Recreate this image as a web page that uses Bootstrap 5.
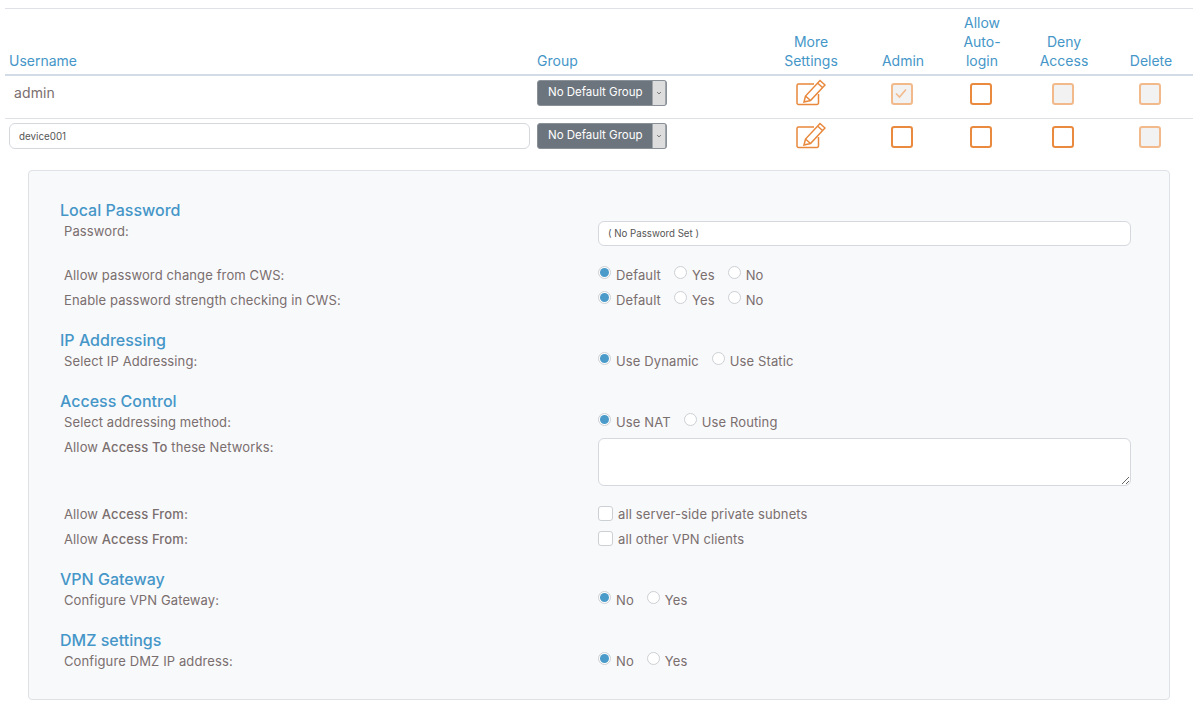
<!DOCTYPE html>
<html lang="en">
<head>
  <meta charset="UTF-8">
  <meta name="viewport" content="width=device-width, initial-scale=1.0">
  <title>User Permissions</title>
  <link href="https://cdn.jsdelivr.net/npm/bootstrap@5.3.0/dist/css/bootstrap.min.css" rel="stylesheet">
  <style>
    body { font-family: Inter, "Open Sans", sans-serif; font-size: 13px; letter-spacing: .12px; color: #7a6e6e; background: #fff; }
    .page-wrap { padding: 8px 7px 0 5px; }

    .user-table { table-layout: fixed; width: 1188px; margin: 0; color: #7a6e6e; }
    .user-table th, .user-table td { padding: 0 4px; background: transparent; color: inherit; }
    .user-table thead tr { height: 66px; border-top: 1px solid #dee2e6; }
    .user-table thead th { font-weight: 400; font-size: 14px; letter-spacing: 0; line-height: 19px; color: #4596c8; vertical-align: bottom; padding-bottom: 4px; border-bottom: 2px solid #d3dce6; }
    .user-table tbody tr { height: 44px; }
    .user-table tbody tr:last-child td { border-bottom: 0; }
    .user-table tbody td { vertical-align: top; padding-top: 4px; border-bottom: 1px solid #dee2e6; }
    .name-static { font-size: 14px; line-height: 26px; padding-left: 5px; display: block; }
    .name-input { width: 521px; height: 26px; font-size: 9.8px; padding: 0 9px; color: #555; border-color: #d5d9de; }

    .group-pick { width: 130px; height: 26px; padding: 0 14px 0 10px; font-size: 11.5px; letter-spacing: 0; color: #fff; border: 1px solid #8a9097; border-radius: 3px;
      background-color: #6c757d;
      background-image: url("data:image/svg+xml,%3Csvg xmlns='http://www.w3.org/2000/svg' viewBox='0 0 14 26'%3E%3Crect width='14' height='26' fill='%23dddddd'/%3E%3Cpath d='M5 12l2 2 2-2' fill='none' stroke='%23666' stroke-width='1'/%3E%3C/svg%3E");
      background-repeat: no-repeat; background-position: right center; background-size: 14px 100%; }

    .pencil-ico { display: block; margin: -2px auto 0; width: 30px; height: 28px; fill: none; stroke: #e8883c; stroke-width: 1.5; }
    .box-check { display: block; margin: 3px 0 0 calc(50% - 12px); width: 22px; height: 22px; border: 2px solid #e98a3e; border-radius: 3px; background: #fff; opacity: 1; float: none; }
    .box-check:disabled { opacity: .55; background-color: #e8e8e8; border-color: #e8812d; }
    .box-check:checked { background-color: #e8e8e8; border-color: #e8812d; background-size: 16px;
      background-image: url("data:image/svg+xml,%3Csvg xmlns='http://www.w3.org/2000/svg' viewBox='0 0 16 16'%3E%3Cpath d='M3 8.500l3.500 3.500L13 4.500' fill='none' stroke='%23e8812d' stroke-width='1.600'/%3E%3C/svg%3E"); }

    .detail-panel { margin: 7px 23px 0; padding: 29px 0 23px 31px; border: 1px solid #dee2e6; border-radius: 4px; background: #f8f9fb; }
    .sect-title { font-size: 16px; line-height: 21px; font-weight: 500; letter-spacing: 0; color: #4596c8; margin: 15px 0 0; }
    .sect-title:first-child { margin-top: 0; }
    .opt-row { display: flex; height: 25px; line-height: 20px; }
    .opt-row.row-pw { height: 44px; }
    .opt-row.row-area { height: 67px; }
    .opt-label { width: 538px; padding-left: 4px; flex: none; }
    .opt-label b { font-weight: 500; }
    .opt-value { display: flex; align-items: flex-start; width: 533px; flex: none; }
    .pw-input { height: 25px; font-size: 9.700px; padding: 0 9px; color: #555; border-color: #d5d9de; }
    .area-input { height: 48px; margin-top: 1px; border-color: #d5d9de; }

    .choice { display: inline-flex; align-items: flex-start; gap: 5px; margin-right: 13px; }
    .choice .form-check-input { width: 13px; height: 13px; margin: 1px 0 0; border-color: #ccd0d4; background-color: #fff; flex: none; }
    .choice .form-check-input[type=radio]:checked { border-color: #ccd0d4; background-color: #fff; background-size: 100% 100%;
      background-image: url("data:image/svg+xml,%3Csvg xmlns='http://www.w3.org/2000/svg' viewBox='0 0 11 11'%3E%3Ccircle cx='5.500' cy='5.500' r='4.500' fill='%234a9aca'/%3E%3C/svg%3E"); }
    .choice .form-check-input[type=checkbox] { width: 15px; height: 15px; margin-top: 2px; border-radius: 3px; }
  </style>
</head>
<body>

<div class="page-wrap">
  <table class="table user-table">
    <colgroup>
      <col style="width:528px"><col style="width:228px"><col style="width:100px"><col style="width:84px"><col style="width:74px"><col style="width:90px"><col style="width:84px">
    </colgroup>
    <thead>
      <tr>
        <th>Username</th>
        <th>Group</th>
        <th class="text-center">More<br>Settings</th>
        <th class="text-center">Admin</th>
        <th class="text-center">Allow<br>Auto-<br>login</th>
        <th class="text-center">Deny<br>Access</th>
        <th class="text-center">Delete</th>
      </tr>
    </thead>
    <tbody>
      <tr>
        <td><span class="name-static">admin</span></td>
        <td><select class="form-select group-pick"><option>No Default Group</option></select></td>
        <td><svg class="pencil-ico" viewBox="0 0 30 28"><path d="M18 6H2.500A1.500 1.500 0 0 0 1 7.500V25a1.500 1.500 0 0 0 1.500 1.500H21a1.500 1.500 0 0 0 1.500-1.500V16"/><path d="M8 24l1.500-6L24 2.500l5 4.500L14.500 22.500zM9.500 18l5 4.500M21.500 5l5 4.500"/></svg></td>
        <td><input class="form-check-input box-check" type="checkbox" checked disabled></td>
        <td><input class="form-check-input box-check" type="checkbox"></td>
        <td><input class="form-check-input box-check" type="checkbox" disabled></td>
        <td><input class="form-check-input box-check" type="checkbox" disabled></td>
      </tr>
      <tr>
        <td><input class="form-control name-input" type="text" value="device001"></td>
        <td><select class="form-select group-pick"><option>No Default Group</option></select></td>
        <td><svg class="pencil-ico" viewBox="0 0 30 28"><path d="M18 6H2.500A1.500 1.500 0 0 0 1 7.500V25a1.500 1.500 0 0 0 1.500 1.500H21a1.500 1.500 0 0 0 1.500-1.500V16"/><path d="M8 24l1.500-6L24 2.500l5 4.500L14.500 22.500zM9.500 18l5 4.500M21.500 5l5 4.500"/></svg></td>
        <td><input class="form-check-input box-check" type="checkbox"></td>
        <td><input class="form-check-input box-check" type="checkbox"></td>
        <td><input class="form-check-input box-check" type="checkbox"></td>
        <td><input class="form-check-input box-check" type="checkbox" disabled></td>
      </tr>
    </tbody>
  </table>

  <div class="detail-panel">
    <h5 class="sect-title">Local Password</h5>
    <div class="opt-row row-pw">
      <div class="opt-label">Password:</div>
      <div class="opt-value"><input class="form-control pw-input" type="text" value="( No Password Set )"></div>
    </div>
    <div class="opt-row">
      <div class="opt-label">Allow password change from CWS:</div>
      <div class="opt-value">
        <label class="choice"><input class="form-check-input" type="radio" name="pwChange" checked>Default</label>
        <label class="choice"><input class="form-check-input" type="radio" name="pwChange">Yes</label>
        <label class="choice"><input class="form-check-input" type="radio" name="pwChange">No</label>
      </div>
    </div>
    <div class="opt-row">
      <div class="opt-label">Enable password strength checking in CWS:</div>
      <div class="opt-value">
        <label class="choice"><input class="form-check-input" type="radio" name="pwStrength" checked>Default</label>
        <label class="choice"><input class="form-check-input" type="radio" name="pwStrength">Yes</label>
        <label class="choice"><input class="form-check-input" type="radio" name="pwStrength">No</label>
      </div>
    </div>

    <h5 class="sect-title">IP Addressing</h5>
    <div class="opt-row">
      <div class="opt-label">Select IP Addressing:</div>
      <div class="opt-value">
        <label class="choice"><input class="form-check-input" type="radio" name="ipMode" checked>Use Dynamic</label>
        <label class="choice"><input class="form-check-input" type="radio" name="ipMode">Use Static</label>
      </div>
    </div>

    <h5 class="sect-title">Access Control</h5>
    <div class="opt-row">
      <div class="opt-label">Select addressing method:</div>
      <div class="opt-value">
        <label class="choice"><input class="form-check-input" type="radio" name="addrMethod" checked>Use NAT</label>
        <label class="choice"><input class="form-check-input" type="radio" name="addrMethod">Use Routing</label>
      </div>
    </div>
    <div class="opt-row row-area">
      <div class="opt-label">Allow <b>Access To</b> these Networks:</div>
      <div class="opt-value"><textarea class="form-control area-input"></textarea></div>
    </div>
    <div class="opt-row">
      <div class="opt-label">Allow <b>Access From:</b></div>
      <div class="opt-value"><label class="choice"><input class="form-check-input" type="checkbox">all server-side private subnets</label></div>
    </div>
    <div class="opt-row">
      <div class="opt-label">Allow <b>Access From:</b></div>
      <div class="opt-value"><label class="choice"><input class="form-check-input" type="checkbox">all other VPN clients</label></div>
    </div>

    <h5 class="sect-title">VPN Gateway</h5>
    <div class="opt-row">
      <div class="opt-label">Configure VPN Gateway:</div>
      <div class="opt-value">
        <label class="choice"><input class="form-check-input" type="radio" name="vpnGw" checked>No</label>
        <label class="choice"><input class="form-check-input" type="radio" name="vpnGw">Yes</label>
      </div>
    </div>

    <h5 class="sect-title">DMZ settings</h5>
    <div class="opt-row">
      <div class="opt-label">Configure DMZ IP address:</div>
      <div class="opt-value">
        <label class="choice"><input class="form-check-input" type="radio" name="dmz" checked>No</label>
        <label class="choice"><input class="form-check-input" type="radio" name="dmz">Yes</label>
      </div>
    </div>
  </div>
</div>

<script src="https://cdn.jsdelivr.net/npm/bootstrap@5.3.0/dist/js/bootstrap.bundle.min.js"></script>
</body>
</html>
